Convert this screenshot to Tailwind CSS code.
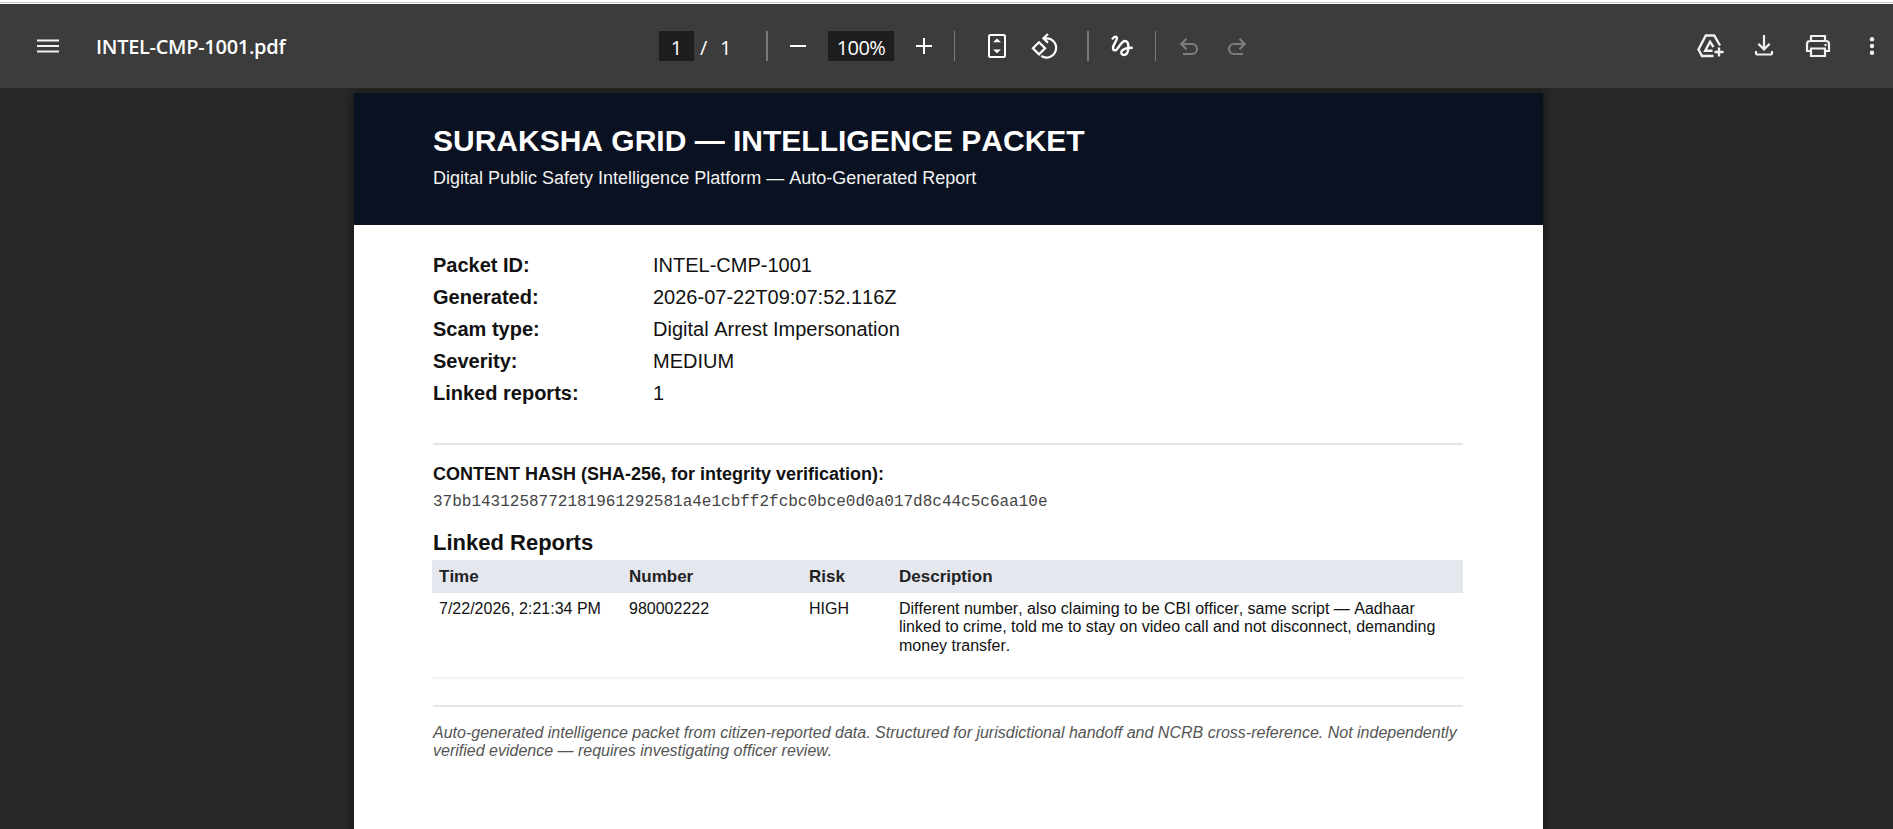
<!DOCTYPE html>
<html lang="en">
<head>
    <meta charset="UTF-8">
    <meta name="viewport" content="width=device-width, initial-scale=1.0">
    <title>INTEL-CMP-1001.pdf</title>
    <script src="https://cdn.jsdelivr.net/npm/@tailwindcss/browser@4"></script>
</head>
<body class="h-screen overflow-hidden flex flex-col bg-[#282828] font-['Liberation_Sans',sans-serif]">

    <!-- Window edge -->
    <div class="h-1 shrink-0 bg-white pt-0.5">
        <div class="h-px bg-[#c8c8c8]"></div>
    </div>

    <!-- Toolbar -->
    <header class="h-[84px] shrink-0 flex items-center bg-[#3c3c3c] text-[#f1f1f1] font-['Open_Sans',sans-serif]">
        <div class="w-[659px] pl-[33px] flex items-center">
            <svg class="size-[30px]" viewBox="0 0 30 30" fill="none" stroke="currentColor" stroke-width="2.2"><path d="M4 9.5h22M4 15h22M4 20.5h22"/></svg>
            <h1 class="ml-[33px] pt-0.5 text-[20px] leading-[30px] font-semibold tracking-[-0.3px] text-white">INTEL-CMP-1001.pdf</h1>
        </div>

        <div class="flex items-center text-[20px] leading-[33px] text-white">
            <span class="w-[35px] h-[30px] bg-[#1e1e1e] text-center">1</span>
            <span class="w-[72px] h-[30px] pl-1.5 flex"><span class="w-5">/</span><span>1</span></span>
            <span class="w-0.5 h-[30px] bg-[#7a7a7a]"></span>
            <svg class="ml-[15px] size-[30px]" viewBox="0 0 30 30" fill="none" stroke="currentColor" stroke-width="2"><path d="M7 15h16"/></svg>
            <span class="ml-[15px] w-[66px] h-[30px] bg-[#1e1e1e] text-center tracking-[-0.6px]">100%</span>
            <svg class="ml-[15px] size-[30px]" viewBox="0 0 30 30" fill="none" stroke="currentColor" stroke-width="2"><path d="M7 15h16M15 7v16"/></svg>
            <span class="ml-[15px] w-px h-[30px] bg-[#7a7a7a]"></span>

            <!-- Fit to page -->
            <svg class="ml-[27px] size-[30px]" viewBox="0 0 30 30"><rect x="7" y="4" width="16" height="22" rx="1.5" fill="none" stroke="currentColor" stroke-width="2"/><path d="M15 7.5l4 3.7h-8zM15 22.3l4-3.7h-8z" fill="currentColor"/></svg>
            <!-- Rotate -->
            <svg class="ml-[18px] size-[30px]" viewBox="0 0 30 30" fill="none" stroke="currentColor" stroke-width="2.2"><path d="M9 11.2l6.1 6.1L9 23.4l-6.1-6.1zM13.5 7.3h3a9.6 9.6 0 1 1-5.3 17.6M18 3l-4.6 4.2L18 11.6"/></svg>
            <span class="ml-[27px] w-0.5 h-[30px] bg-[#7a7a7a]"></span>

            <!-- Draw -->
            <svg class="ml-[18px] size-[30px]" viewBox="0 0 30 30" fill="none" stroke="currentColor" stroke-width="2.4"><path d="M5 8.2C6.5 6.5 8.3 4.9 9.6 6.2C11.5 8.5 5.4 13.5 6 17.5C6.3 19.7 8.3 20 10 18.2C12.5 15.5 14.5 10 18 10C20.5 10 21.3 12.5 21.3 15.5C21.3 20 20 24 17 24C15 24 13.8 22.5 14.5 20.5C15.5 17.8 19 16.8 25.7 16.7"/></svg>
            <span class="ml-[18px] w-px h-[30px] bg-[#7a7a7a]"></span>

            <!-- Undo / redo -->
            <svg class="ml-[18px] size-[30px] text-[#7d7d7d]" viewBox="0 0 30 30" fill="none" stroke="currentColor" stroke-width="2.2"><path d="M7.5 13H18a5 5 0 0 1 0 10H9M12.5 7.8L7.3 13l5.2 5.2"/></svg>
            <svg class="ml-[18px] size-[30px] text-[#7d7d7d]" viewBox="0 0 30 30" fill="none" stroke="currentColor" stroke-width="2.2"><path d="M22.5 13H12a5 5 0 0 0 0 10h9M17.5 7.8l5.2 5.2-5.2 5.2"/></svg>
        </div>

        <div class="ml-auto pr-1.5 flex items-center gap-6">
            <!-- Save to Drive -->
            <svg class="size-[30px]" viewBox="0 0 30 30" fill="none" stroke="currentColor" stroke-width="2.4"><path d="M25 14.5L19.2 4.5h-8.4L3.5 18.5 7 25h11.5M18.5 16L15 10.8 10.2 19.7h7.3M24 16.500v9M19.500 21h9"/></svg>
            <!-- Download -->
            <svg class="size-[30px]" viewBox="0 0 30 30" fill="none" stroke="currentColor" stroke-width="2.2"><path d="M15 4v14M9.3 12.7l5.7 5.7 5.7-5.7M7 20v2.5q0 1 1 1h14q1 0 1-1V20"/></svg>
            <!-- Print -->
            <svg class="size-[30px]" viewBox="0 0 30 30" fill="none" stroke="currentColor" stroke-width="2.2"><path d="M8 10V5h14v5M8 20H4v-7q0-3 3-3h16q3 0 3 3v7h-4M8 17.5h14V25H8z"/><path d="M21.5 14h2"/></svg>
            <!-- More -->
            <svg class="size-[30px]" viewBox="0 0 30 30" fill="currentColor"><circle cx="15" cy="8.3" r="2.2"/><circle cx="15" cy="15" r="2.2"/><circle cx="15" cy="21.7" r="2.2"/></svg>
        </div>
    </header>

    <!-- Document -->
    <main class="flex-1 min-h-0 overflow-hidden pt-[5px] pl-[354px]">
        <article class="w-[1189px] h-[1684px] bg-white text-[#111111] [font-kerning:none] [font-variant-ligatures:none] shadow-[0_0_8px_2px_rgba(0,0,0,0.4)]">
            <div class="h-[132px] pl-[79px] pt-[30px] bg-[#0a1120] text-white">
                <h2 class="text-[30px] leading-9 font-bold">SURAKSHA GRID — INTELLIGENCE PACKET</h2>
                <p class="mt-2 text-[18px] leading-[22px] text-[#f2f2f2]">Digital Public Safety Intelligence Platform — Auto-Generated Report</p>
            </div>

            <div class="pl-[79px] pr-20">
                <dl class="pt-6 grid grid-cols-[220px_1fr] text-[20px] leading-8">
                    <dt class="font-bold">Packet ID:</dt><dd>INTEL-CMP-1001</dd>
                    <dt class="font-bold">Generated:</dt><dd>2026-07-22T09:07:52.116Z</dd>
                    <dt class="font-bold">Scam type:</dt><dd>Digital Arrest Impersonation</dd>
                    <dt class="font-bold">Severity:</dt><dd>MEDIUM</dd>
                    <dt class="font-bold">Linked reports:</dt><dd>1</dd>
                </dl>

                <div class="mt-[34px] h-0.5 bg-[#e5e5e5]"></div>

                <h3 class="mt-[18px] text-[18px] leading-[22px] font-bold">CONTENT HASH (SHA-256, for integrity verification):</h3>
                <p class="mt-[7px] text-[16px] leading-5 text-[#444444] font-['Liberation_Mono',monospace]">37bb1431258772181961292581a4e1cbff2fcbc0bce0d0a017d8c44c5c6aa10e</p>

                <h3 class="mt-[17px] text-[22px] leading-7 font-bold">Linked Reports</h3>
                <div class="mt-[3px] -ml-px pl-[7px] h-[33px] grid grid-cols-[190px_180px_90px_1fr] bg-[#e5e7ef] text-[17px] leading-[33px] font-bold text-[#222222]">
                    <span>Time</span><span>Number</span><span>Risk</span><span>Description</span>
                </div>
                <div class="pl-1.5 pt-[7px] h-[84px] grid grid-cols-[190px_180px_90px_1fr] text-[16px] leading-[18.4px]">
                    <span>7/22/2026, 2:21:34 PM</span>
                    <span>980002222</span>
                    <span>HIGH</span>
                    <p>Different number, also claiming to be CBI officer, same script — Aadhaar<br>linked to crime, told me to stay on video call and not disconnect, demanding<br>money transfer.</p>
                </div>
                <div class="h-0.5 bg-[#f3f3f3]"></div>

                <div class="mt-[26px] h-0.5 bg-[#e5e5e5]"></div>
                <p class="mt-[17px] text-[16px] leading-[18.4px] italic text-[#555555]">Auto-generated intelligence packet from citizen-reported data. Structured for jurisdictional handoff and NCRB cross-reference. Not independently<br>verified evidence — requires investigating officer review.</p>
            </div>
        </article>
    </main>

</body>
</html>
